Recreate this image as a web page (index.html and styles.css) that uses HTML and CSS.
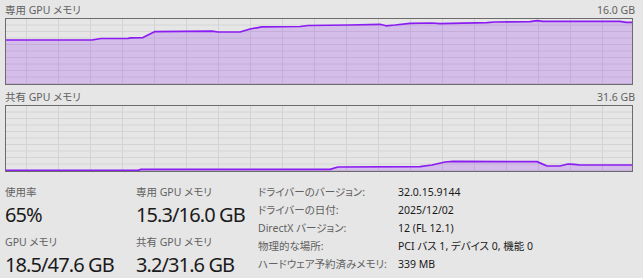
FILE: index.html
```html
<!DOCTYPE html>
<html lang="ja">
<head>
<meta charset="utf-8">
<title>GPU メモリ</title>
<link rel="stylesheet" href="styles.css">
</head>
<body>
<div class="panel">
  <div class="ghead">
    <span>専用 GPU メモリ</span>
    <span class="gmax">16.0 GB</span>
  </div>
  <div class="graph">
    <svg viewBox="6 19 626 65" preserveAspectRatio="none">
      <path class="fill" d="M5,40 L92,40 L101,38.5 L128,38.3 L131,37.8 L143,37.6 L155,31.6 L212,31.2 L218,32 L240,32 L250,29 L262,26.8 L300,26.5 L308,25.5 L350,25 L380,24.3 L386,25.8 L395,25 L410,23.3 L432,23 L440,23.6 L487,22.6 L495,22 L530,21.6 L537,20.6 L543,21.4 L620,21.4 L626,22.3 L633,22.5 L633,85 L5,85 Z"/>
      <path class="line" d="M5,40 L92,40 L101,38.5 L128,38.3 L131,37.8 L143,37.6 L155,31.6 L212,31.2 L218,32 L240,32 L250,29 L262,26.8 L300,26.5 L308,25.5 L350,25 L380,24.3 L386,25.8 L395,25 L410,23.3 L432,23 L440,23.6 L487,22.6 L495,22 L530,21.6 L537,20.6 L543,21.4 L620,21.4 L626,22.3 L633,22.5"/>
    </svg>
  </div>
  <div class="ghead second">
    <span>共有 GPU メモリ</span>
    <span class="gmax">31.6 GB</span>
  </div>
  <div class="graph">
    <svg viewBox="6 106 626 65" preserveAspectRatio="none">
      <path class="fill" d="M5,170.3 L138,170.3 L141,169.4 L330,169.4 L338,167 L420,166.6 L432,165 L445,162 L453,161.4 L537,161.6 L547,166 L560,166 L568,164 L574,164.4 L580,165 L633,165 L633,172 L5,172 Z"/>
      <path class="line" d="M5,170.3 L138,170.3 L141,169.4 L330,169.4 L338,167 L420,166.6 L432,165 L445,162 L453,161.4 L537,161.6 L547,166 L560,166 L568,164 L574,164.4 L580,165 L633,165"/>
    </svg>
  </div>
  <div class="stats">
    <div class="col">
      <div class="stat">
        <div class="lbl">使用率</div>
        <div class="big">65%</div>
      </div>
      <div class="stat">
        <div class="lbl">GPU メモリ</div>
        <div class="big">18.5/47.6 GB</div>
      </div>
    </div>
    <div class="col">
      <div class="stat">
        <div class="lbl">専用 GPU メモリ</div>
        <div class="big">15.3/16.0 GB</div>
      </div>
      <div class="stat">
        <div class="lbl">共有 GPU メモリ</div>
        <div class="big">3.2/31.6 GB</div>
      </div>
    </div>
    <dl class="info">
      <dt>ドライバーのバージョン:</dt><dd>32.0.15.9144</dd>
      <dt>ドライバーの日付:</dt><dd>2025/12/02</dd>
      <dt>DirectX バージョン:</dt><dd>12 (FL 12.1)</dd>
      <dt>物理的な場所:</dt><dd>PCI バス 1, デバイス 0, 機能 0</dd>
      <dt>ハードウェア予約済みメモリ:</dt><dd>339 MB</dd>
    </dl>
  </div>
</div>
</body>
</html>
```
FILE: styles.css
```css
html, body {
  margin: 0;
  background: #e6e6e6;
  font-family: "Noto Sans", "Noto Sans CJK JP", sans-serif;
  font-feature-settings: "palt";
}

.panel {
  padding: 0 10px 0 5px;
  width: 628px;
}

.ghead {
  display: flex;
  justify-content: space-between;
  align-items: flex-end;
  height: 18px;
  font-size: 10.5px;
  line-height: 15px;
  color: #616161;
}

.ghead.second {
  height: 20px;
}

.gmax {
  margin-right: -2px;
}

.graph {
  height: 65px;
  border: 1px solid #6c6c6c;
  background-color: #e6e6e6;
  background-image:
    linear-gradient(to right, #d3d3d3 1px, transparent 1px),
    linear-gradient(to bottom, transparent calc(100% - 1px), #d3d3d3 calc(100% - 1px));
  background-size: 32px 100%, 100% 10%;
  background-position: 20px 0, 0 0;
}

.graph svg {
  display: block;
  width: 626px;
  height: 65px;
}

.fill {
  fill: rgba(139, 24, 240, 0.2);
  stroke: none;
}

.line {
  fill: none;
  stroke: #8a1cf2;
  stroke-width: 1.7;
  stroke-linejoin: round;
}

.stats {
  display: grid;
  grid-template-columns: 131px 122px 1fr;
  margin-top: 11px;
}

.col {
  padding-top: 1px;
  display: flex;
  flex-direction: column;
  gap: 6px;
}

.lbl {
  font-size: 10.5px;
  line-height: 16px;
  color: #616161;
}

.big {
  margin-top: 2px;
  font-size: 20px;
  line-height: 26px;
  letter-spacing: -0.9px;
  color: #1a1a1a;
}

.info {
  margin: 0;
  display: grid;
  grid-template-columns: 140px auto;
  grid-auto-rows: 18px;
  align-items: center;
  font-size: 10.5px;
  line-height: 16px;
}

.info dt {
  color: #616161;
}

.info dd {
  margin: 0;
  color: #1a1a1a;
}
```
